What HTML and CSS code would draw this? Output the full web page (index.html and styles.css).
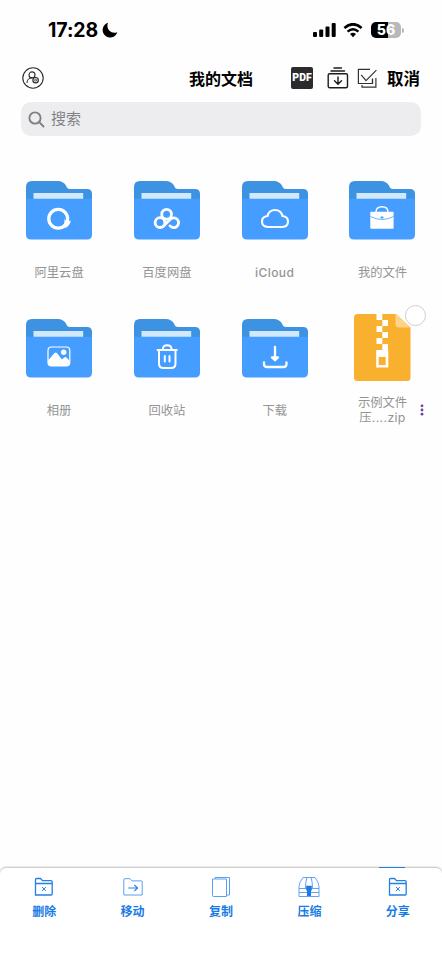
FILE: index.html
```html
<!DOCTYPE html>
<html lang="zh-CN">
<head>
<meta charset="utf-8">
<title>我的文档</title>
<link rel="stylesheet" href="styles.css">
</head>
<body>
<svg width="0" height="0" class="defs" aria-hidden="true">
  <symbol id="folder" viewBox="0 0 66 59">
    <path d="M0 25V6Q0 0 6 0H32Q37 0 40 4.500Q41 8 44 8H61Q66 8 66 13V25Z" fill="#3d92e1"/>
    <path d="M7.500 12H57.200V19H7.500Z" fill="#d0e9fd"/>
    <path d="M0 17.800H66V53.500Q66 58.500 61 58.500H5Q0 58.500 0 53.500Z" fill="#449dff"/>
  </symbol>
  <symbol id="boxed-folder" viewBox="0 0 20 20">
    <path d="M1.500 17.800V2.500Q1.500 1.500 2.500 1.500H6.500L8.500 3.700H17Q18.200 3.700 18.200 5V17Q18.200 18 17.200 18H1.500ZM1.500 6.500H18.200" fill="none" stroke="#2380e5" stroke-width="1.300"/>
    <path d="M8 10L11.800 14M11.800 10L8 14" stroke="#2380e5" fill="none"/>
  </symbol>
</svg>
<div class="screen">
  <header class="status">
    <div class="clock">17:28
      <svg width="16" height="16" viewBox="0 0 16 16"><path d="M6 .8A7.500 7.500 0 1 0 15.300 10.200C9.500 12.500 3.500 7.500 6 .8Z"/></svg>
    </div>
    <div class="signals">
      <svg width="23" height="15" viewBox="0 0 23 15"><rect y="9" width="4" height="5" rx="1"/><rect x="6.200" y="6.500" width="4" height="7.500" rx="1"/><rect x="12.500" y="3.500" width="4" height="10.500" rx="1"/><rect x="18.700" width="4" height="14" rx="1"/></svg>
      <svg width="20" height="15" viewBox="0 0 20 15"><path d="M1.400 5Q10-2.500 18.600 5" fill="none" stroke="#000" stroke-width="2.700"/><path d="M4.600 8.600Q10 3.900 15.400 8.600" fill="none" stroke="#000" stroke-width="2.500"/><path d="M7 11Q10 8.300 13 11L10 14.200Z"/></svg>
      <div class="battery">56</div>
    </div>
  </header>

  <nav class="nav">
    <svg width="22" height="22" viewBox="0 0 22 22" fill="none" stroke="#2c2c2c"><circle cx="11" cy="11" r="10.200" stroke-width="1.100"/><circle cx="10" cy="7.900" r="3" stroke-width="1.100"/><path d="M5 16C5 12.500 7 10.900 10 10.900"/><circle cx="13.600" cy="13.200" r="2.700" stroke-width="1.200"/><circle cx="13.600" cy="13.200" r="1" stroke-width=".8"/></svg>
    <h1>我的文档</h1>
    <div class="actions">
      <span class="pdf">PDF</span>
      <svg width="22" height="22" viewBox="0 0 22 22" fill="none" stroke="#1c1c1c" stroke-width="1.400" stroke-linecap="round" stroke-linejoin="round"><path d="M7 1H14.500M4 4H17.500"/><rect x="1.200" y="6.800" width="19.300" height="14" rx="1.500"/><path d="M11 10V17M7.500 13.700L11 17.200L14.500 13.700"/></svg>
      <svg width="21" height="21" viewBox="0 0 21 21" fill="none" stroke="#333" stroke-width="1.200"><path d="M13 1.400H1.400V15.500H15.500V11"/><path d="M4.200 6.800L9 12.600L19.400 2.200"/><path d="M15.500 10.500V15.500H9.500M18.900 10V19.100H5V17"/></svg>
      <button>取消</button>
    </div>
  </nav>

  <div class="search">
    <svg width="17" height="17" viewBox="0 0 17 17" fill="none" stroke="#808084" stroke-width="1.900" stroke-linecap="round"><circle cx="7" cy="7" r="5.600"/><path d="M11.200 11.200L15.500 15.500"/></svg>
    <span>搜索</span>
  </div>

  <main class="files">
    <div class="item">
      <svg class="icon" viewBox="0 0 66 59"><use href="#folder"/><circle cx="32.200" cy="37.800" r="9.400" fill="none" stroke="#fff" stroke-width="3.300"/><path d="M38 38.300Q40.500 40.800 44.800 39.400Q44 45 39 47L36.500 44.500Q39.500 41.500 38 38.300Z" fill="#fff"/></svg>
      <span class="label">阿里云盘</span>
    </div>
    <div class="item">
      <svg class="icon" viewBox="0 0 66 59"><use href="#folder"/><g fill="none" stroke="#fff" stroke-width="2.800"><circle cx="32.600" cy="33.300" r="4.900"/><circle cx="26" cy="41.600" r="4.900"/><path d="M29.300 45.200L36.300 38.200A4.900 4.900 0 1 1 36 44.900" stroke-linecap="round"/></g></svg>
      <span class="label">百度网盘</span>
    </div>
    <div class="item">
      <svg class="icon" viewBox="0 0 66 59"><use href="#folder"/><path d="M26 46Q20 46 20 40.600Q20 35.500 25.500 35Q27 29 33 29Q39 29 40.500 35Q46 35.500 46 40.600Q46 46 40.500 46Z" fill="none" stroke="#fff" stroke-width="2.100"/></svg>
      <span class="label latin">iCloud</span>
    </div>
    <div class="item">
      <svg class="icon" viewBox="0 0 66 59"><use href="#folder"/><path d="M27 31Q27 25.700 33 25.700T39 31" fill="none" stroke="#fff" stroke-width="1.400"/><rect x="21.300" y="30.700" width="23.300" height="17" rx=".8" fill="#fff"/><path d="M21.300 35.500Q33 41.500 44.600 35.500" fill="none" stroke="#449dff" stroke-width=".8"/><rect x="31.500" y="35.500" width="3" height="2" rx=".7" fill="#449dff"/></svg>
      <span class="label">我的文件</span>
    </div>
    <div class="item">
      <svg class="icon" viewBox="0 0 66 59"><use href="#folder"/><rect x="22" y="28" width="21.800" height="19" rx="3.500" fill="none" stroke="#fff" stroke-width="1.200"/><path d="M22 41.500L28.500 34Q30 33 31.300 34.500L36 40.500L38.200 38.500Q39.500 37.500 41 39L43.800 42V43.500Q43.800 47 40.300 47H25.500Q22 47 22 43.500Z" fill="#fff"/><circle cx="37.700" cy="33.300" r="2.700" fill="#fff"/></svg>
      <span class="label">相册</span>
    </div>
    <div class="item">
      <svg class="icon" viewBox="0 0 66 59"><use href="#folder"/><g fill="none" stroke="#fff" stroke-width="2" stroke-linecap="round"><path d="M23.500 31H42.800M25 31.500V44.500Q25 49 29.500 49H37Q41.500 49 41.500 44.500V31.500M28.700 30.500Q29 26.300 33.200 26.300T37.700 30.500"/><path d="M30.800 37V42.500M35.500 37V42.500"/></g></svg>
      <span class="label">回收站</span>
    </div>
    <div class="item">
      <svg class="icon" viewBox="0 0 66 59"><use href="#folder"/><g fill="none" stroke="#fff" stroke-width="2.300" stroke-linecap="round" stroke-linejoin="round"><path d="M33 28V39"/><path d="M30 38.500L33 41.200L36 38.500Z" fill="#fff"/><path d="M22 43.500V45Q22 48 25 48H41.500Q44.500 48 44.500 45V43.500"/></g></svg>
      <span class="label">下载</span>
    </div>
    <div class="item archive">
      <svg class="zip" viewBox="0 0 57 67"><path d="M3.500 0H42L56.500 13.500V63.500Q56.500 67 53 67H3.500Q0 67 0 63.500V3.500Q0 0 3.500 0Z" fill="#f9b02f"/><path d="M42 0L56.500 13.500H45Q41.500 13.500 41.500 10V0Z" fill="#fcd487"/><path d="M22.500 0H28.300V6H34V12H28.300V18H34V24H28.300V30H34V36H34.300V53.500H22.200V36H28.300V30H22.500V24H28.300V18H22.500V12H28.300V6H22.500Z" fill="#fff"/><rect x="24.700" y="43" width="7" height="8" fill="#f9b02f"/></svg>
      <i class="select"></i>
      <span class="label">示例文件<br><span class="ext">压....zip</span></span>
      <svg class="more" width="4" height="12" viewBox="0 0 4 12" fill="#70419b"><circle cx="2" cy="1.800" r="1.400"/><circle cx="2" cy="6" r="1.400"/><circle cx="2" cy="10.200" r="1.400"/></svg>
    </div>
  </main>

  <footer class="toolbar">
    <i class="peek"></i>
    <div class="tool"><svg viewBox="0 0 20 20"><use href="#boxed-folder"/></svg><span>删除</span></div>
    <div class="tool"><svg viewBox="0 0 20 20" fill="none" stroke="#5b9ff0"><path d="M.8 17.500V2.500Q.8 1.700 1.600 1.700H7L9 3.900H18.500Q19.200 3.900 19.200 4.700V18H.8Z"/><path d="M5.300 11H14.300M11.300 7.800L14.500 11L11.300 14.200" stroke="#2380e5" stroke-width="1.200"/></svg><span>移动</span></div>
    <div class="tool"><svg class="copy" viewBox="0 0 20 22" fill="none" stroke="#5b9ff0"><path d="M1.500 3H15.500V20.500H2.500Q1.500 20.500 1.500 19.500ZM4 2.700V1.500H18.500V19H16"/></svg><span>复制</span></div>
    <div class="tool"><svg class="compress" viewBox="0 0 22 22" fill="none" stroke="#5599ed"><path d="M1 20.500V10.500Q1 6.500 5 1.500H17Q21 6.500 21 10.500V20.500ZM1 12.500H21M1 16.500H21" stroke-width=".9"/><path d="M9 1.500Q7.500 5.500 7.500 12M13 1.500Q14.500 5.500 14.500 12" stroke-width=".9"/><path d="M8.200 9.800H13.800V14L13 15V20H9V15L8.200 14Z" fill="#187be6" stroke="none"/></svg><span>压缩</span></div>
    <div class="tool"><svg viewBox="0 0 20 20"><use href="#boxed-folder"/></svg><span>分享</span></div>
  </footer>
</div>
</body>
</html>
```
FILE: styles.css
```css
* { box-sizing: border-box; }
body {
  margin: 0;
  background: #fff;
  font-family: Inter, "Noto Sans CJK SC", sans-serif;
}
svg { display: block; flex: none; }
.defs { position: absolute; }
.screen {
  width: 442px;
  height: 960px;
  display: flex;
  flex-direction: column;
  overflow: hidden;
  background: #fefefe;
}
.status {
  height: 60px;
  padding: 0 39px 0 48px;
  display: flex;
  align-items: center;
  justify-content: space-between;
}
.clock {
  display: flex;
  align-items: center;
  gap: 4px;
  font-size: 19.500px;
  font-weight: 700;
  letter-spacing: -.1px;
}
.signals { display: flex; align-items: center; gap: 7px; }
.battery {
  position: relative;
  width: 30px;
  height: 16px;
  margin: 0 2px 0 1px;
  border-radius: 5px;
  background: linear-gradient(90deg, #000 56%, #b9b9b9 56%);
  color: #fff;
  font-size: 14px;
  font-weight: 800;
  line-height: 16px;
  text-align: center;
}
.battery::after {
  content: "";
  position: absolute;
  left: 31px;
  top: 5.500px;
  width: 1.500px;
  height: 5px;
  border-radius: 0 2px 2px 0;
  background: #b9b9b9;
}
.nav {
  height: 42px;
  padding: 0 22px 6px;
  display: grid;
  grid-template-columns: 1fr auto 1fr;
  align-items: center;
}
.nav h1 {
  margin: 0;
  padding-top: 1px;
  font-size: 16px;
  line-height: 24px;
  font-weight: 700;
}
.actions { display: flex; align-items: center; justify-content: flex-end; gap: 9px; }
.actions svg:nth-of-type(1) { margin-right: -1px; }
.pdf {
  width: 22px;
  height: 22px;
  margin-right: 5px;
  border-radius: 2px;
  background: #2b2b2d;
  color: #fff;
  font: 900 10.500px/22px Roboto, sans-serif;
  text-align: center;
}
.actions button {
  border: 0;
  padding: 0;
  background: none;
  color: #000;
  font: 700 16.500px/24px "Noto Sans CJK SC", sans-serif;
}
.search {
  height: 34px;
  margin: 0 21px;
  padding: 0 7px;
  display: flex;
  align-items: center;
  gap: 6px;
  border-radius: 10px;
  background: #ededef;
  color: #828286;
  font-size: 15px;
}
.search span { line-height: 20px; }
.files {
  flex: 1;
  margin-top: 45px;
  padding: 0 5.200px;
  display: grid;
  grid-template-columns: repeat(4, 107.800px);
  grid-auto-rows: 138px;
  align-content: start;
}
.item {
  display: flex;
  flex-direction: column;
  align-items: center;
  gap: 25px;
}
.icon { width: 66px; height: 59px; }
.label {
  color: #949494;
  font-size: 12.300px;
  line-height: 15px;
  text-align: center;
}
.latin { font-weight: 500; font-size: 12px; letter-spacing: .4px; }
.ext { letter-spacing: .35px; }
.archive { position: relative; gap: 14px; margin-top: -5px; }
.zip { width: 57px; height: 67px; }
.select {
  position: absolute;
  left: 76px;
  top: -9px;
  width: 21px;
  height: 21px;
  border: 1px solid #cfcfd2;
  border-radius: 50%;
  background: #fff;
}
.more { position: absolute; left: 91px; top: 90px; }
.toolbar {
  position: relative;
  height: 92px;
  padding-top: 9px;
  display: grid;
  grid-template-columns: repeat(5, 1fr);
  border-radius: 6px 6px 0 0;
  background: #fff;
  box-shadow: 0 -1px 2px rgba(0, 0, 0, .25);
}
.peek {
  position: absolute;
  right: 37px;
  top: -1px;
  width: 26px;
  height: 1px;
  background: #1b7de6;
}
.tool {
  display: flex;
  flex-direction: column;
  align-items: center;
  gap: 6px;
  color: #187be6;
  font-size: 12px;
  line-height: 18px;
  font-weight: 700;
}
.tool svg { width: 20px; height: 20px; }
.tool .copy { height: 22px; margin: -1px 0; }
.tool .compress { width: 22px; height: 22px; margin: -1px 0; }
```
